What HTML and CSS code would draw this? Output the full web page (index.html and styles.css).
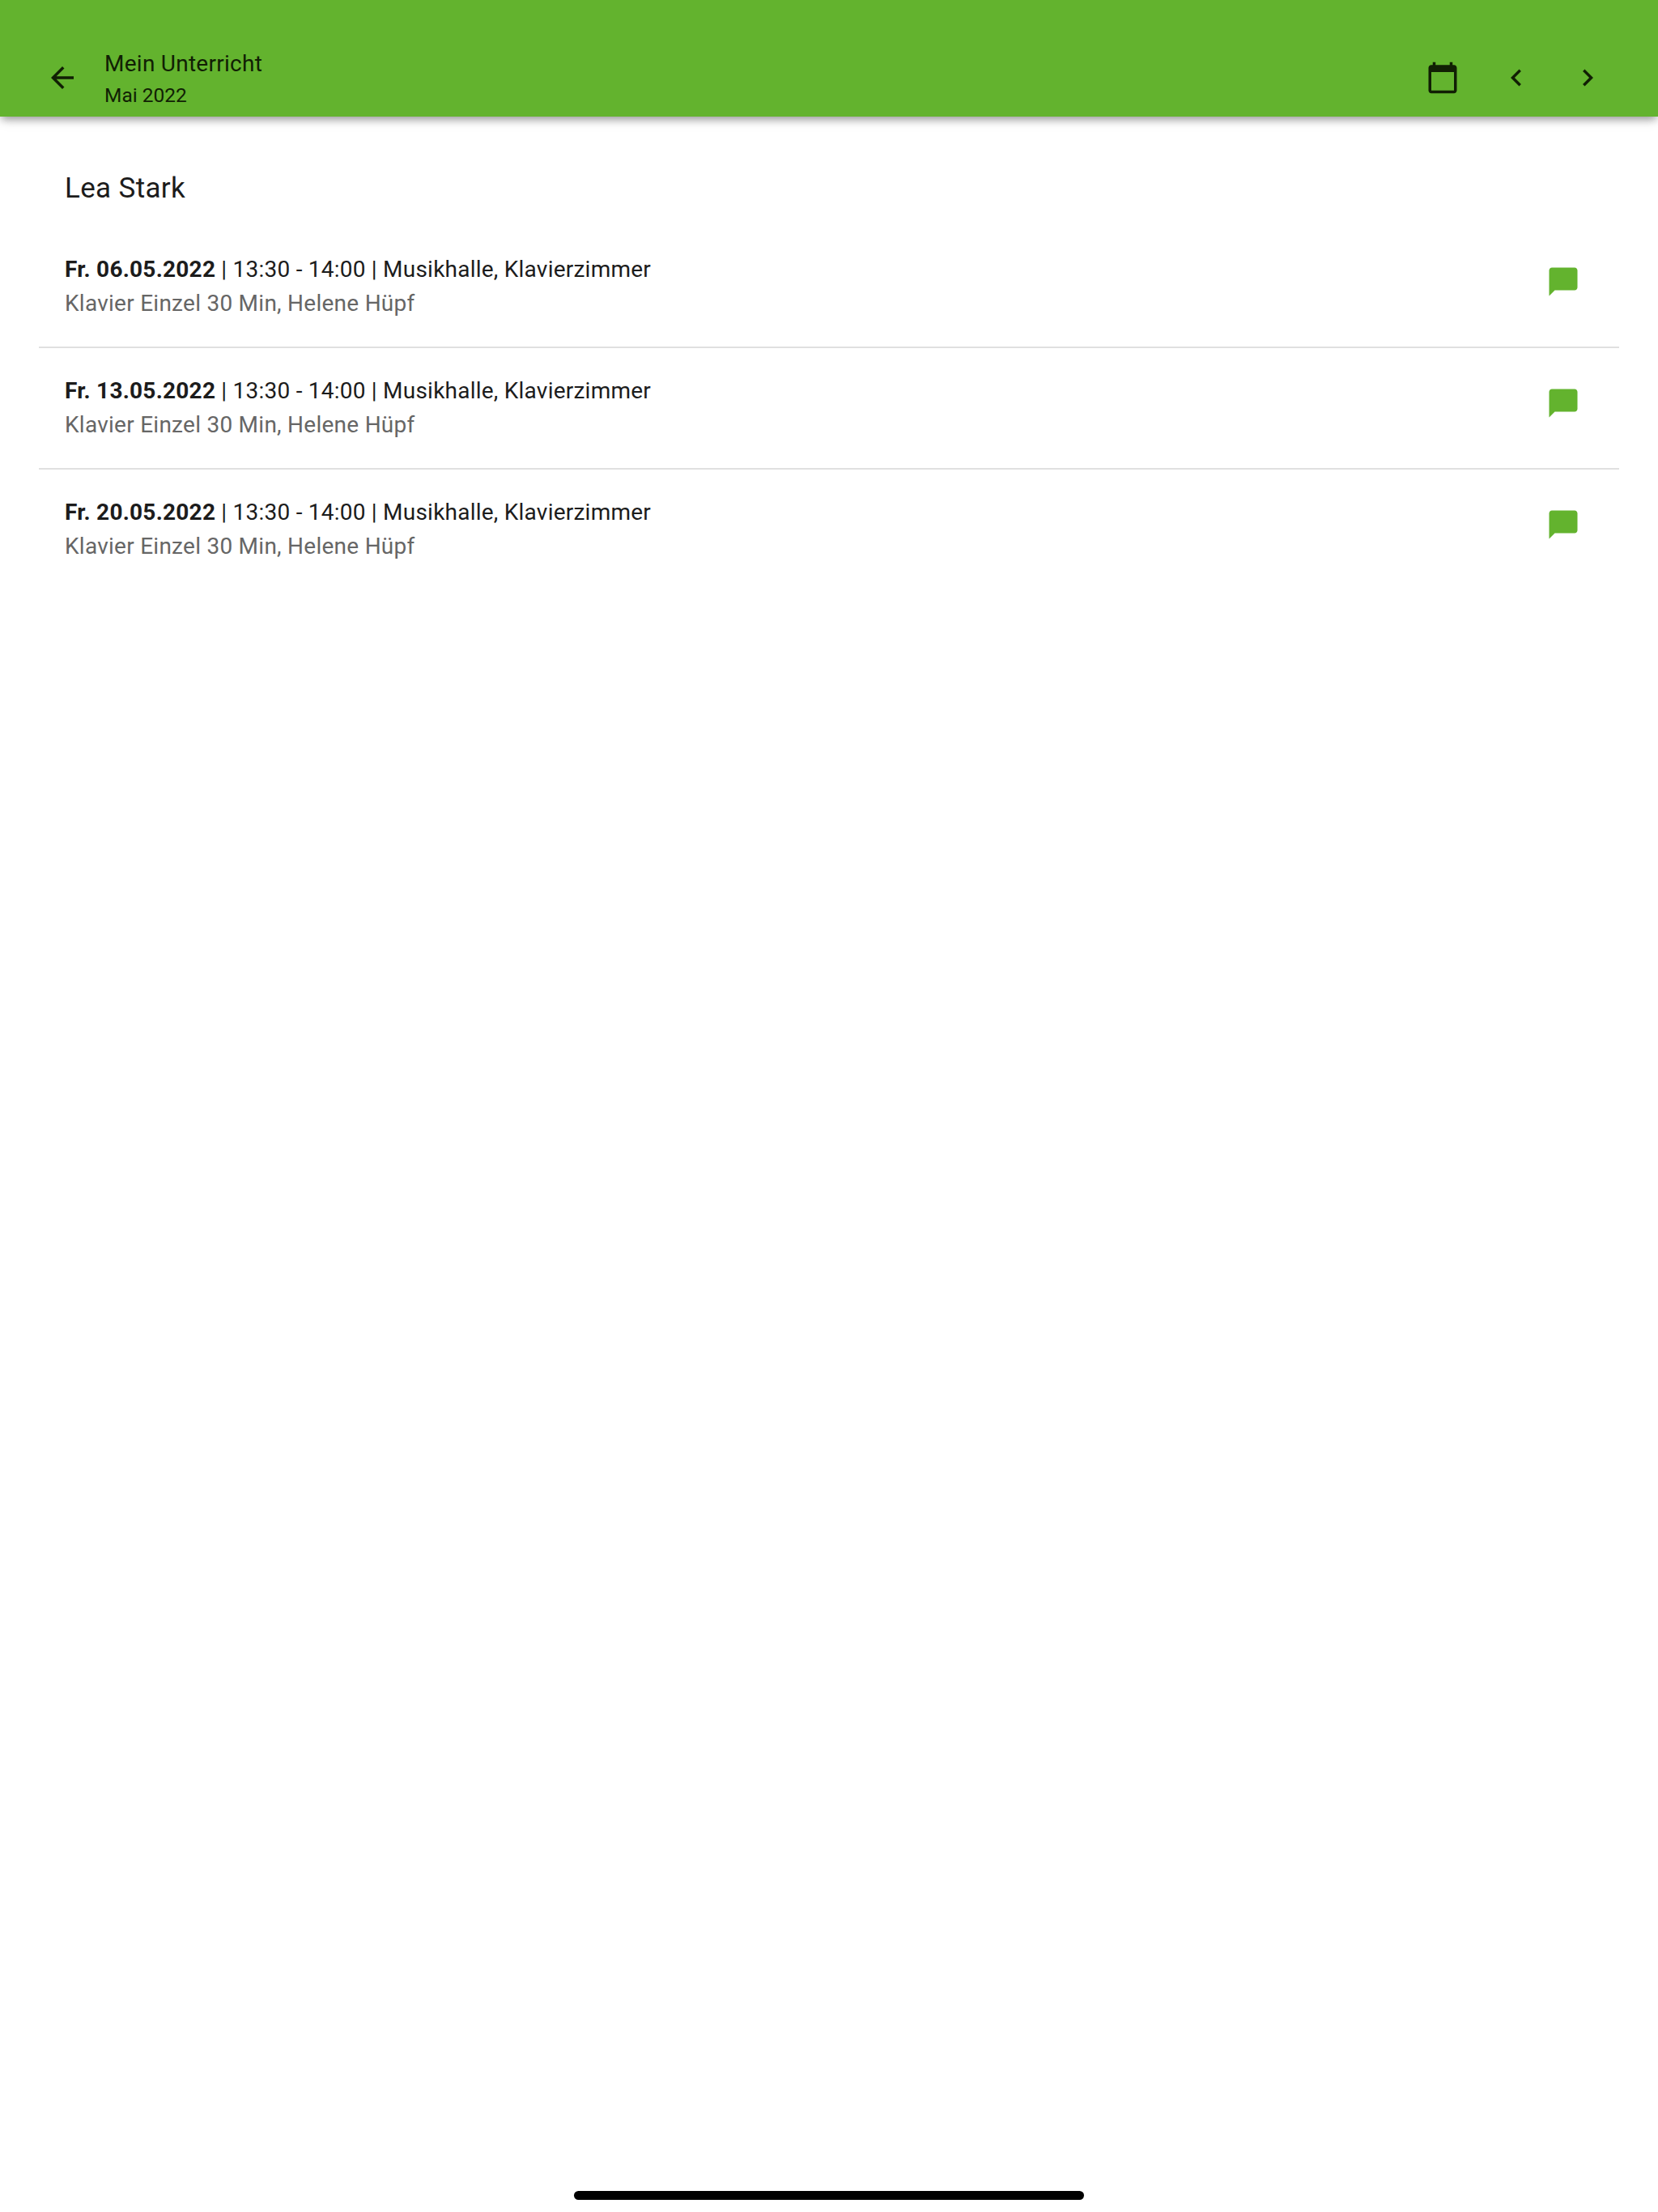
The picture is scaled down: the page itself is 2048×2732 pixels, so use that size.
FILE: index.html
```html
<!DOCTYPE html>
<html lang="de">
<head>
    <meta charset="UTF-8">
    <meta name="viewport" content="width=device-width, initial-scale=1.0">
    <title>Mein Unterricht</title>
    <link rel="stylesheet" href="styles.css">
</head>
<body>
    <div class="header">
        <svg class="icon back" viewBox="0 0 24 24"><path d="M20 11H7.83l5.59-5.59L12 4l-8 8 8 8 1.41-1.41L7.83 13H20v-2z"/></svg>
        <div class="title">
            <div class="title-main">Mein Unterricht</div>
            <div class="title-sub">Mai 2022</div>
        </div>
        <div class="actions">
            <svg class="icon calendar" viewBox="0 0 24 24"><path d="M20 3h-1V1h-2v2H7V1H5v2H4c-1.1 0-2 .9-2 2v16c0 1.1.9 2 2 2h16c1.1 0 2-.9 2-2V5c0-1.1-.9-2-2-2zm0 18H4V8h16v13z"/></svg>
            <svg class="icon prev" viewBox="0 0 24 24"><path d="M15.41 7.41L14 6l-6 6 6 6 1.41-1.41L10.83 12z"/></svg>
            <svg class="icon next" viewBox="0 0 24 24"><path d="M8.59 16.59L10 18l6-6-6-6-1.41 1.41L13.17 12z"/></svg>
        </div>
    </div>

    <div class="main-content">
        <h2 class="student">Lea Stark</h2>
        <div class="lesson">
            <div class="lesson-text">
                <div class="lesson-line"><strong>Fr. 06.05.2022</strong> | 13:30 - 14:00 | Musikhalle, Klavierzimmer</div>
                <div class="lesson-sub">Klavier Einzel 30 Min, Helene Hüpf</div>
            </div>
            <svg class="icon chat" viewBox="0 0 24 24"><path d="M20 2H4c-1.1 0-2 .9-2 2v18l4-4h14c1.1 0 2-.9 2-2V4c0-1.1-.9-2-2-2z"/></svg>
        </div>
        <div class="lesson">
            <div class="lesson-text">
                <div class="lesson-line"><strong>Fr. 13.05.2022</strong> | 13:30 - 14:00 | Musikhalle, Klavierzimmer</div>
                <div class="lesson-sub">Klavier Einzel 30 Min, Helene Hüpf</div>
            </div>
            <svg class="icon chat" viewBox="0 0 24 24"><path d="M20 2H4c-1.1 0-2 .9-2 2v18l4-4h14c1.1 0 2-.9 2-2V4c0-1.1-.9-2-2-2z"/></svg>
        </div>
        <div class="lesson">
            <div class="lesson-text">
                <div class="lesson-line"><strong>Fr. 20.05.2022</strong> | 13:30 - 14:00 | Musikhalle, Klavierzimmer</div>
                <div class="lesson-sub">Klavier Einzel 30 Min, Helene Hüpf</div>
            </div>
            <svg class="icon chat" viewBox="0 0 24 24"><path d="M20 2H4c-1.1 0-2 .9-2 2v18l4-4h14c1.1 0 2-.9 2-2V4c0-1.1-.9-2-2-2z"/></svg>
        </div>
    </div>

    <div class="home-bar"></div>
</body>
</html>
```

FILE: styles.css
```css
body {
    font-family: Roboto, sans-serif;
    margin: 0;
    padding: 0;
    height: 2732px;
    overflow: hidden;
    display: flex;
    flex-direction: column;
    background: white;
    color: #1c1c1c;
}

.icon {
    display: block;
    width: 42px;
    height: 42px;
    flex-shrink: 0;
    fill: #111f04;
}

.header {
    height: 144px;
    box-sizing: border-box;
    flex-shrink: 0;
    display: flex;
    align-items: flex-end;
    padding: 0 66px 27px 56px;
    background: #63b32e;
    box-shadow: 0 5px 10px -2px rgba(0, 0, 0, 0.4), 0 2px 20px rgba(0, 0, 0, 0.08);
    color: #111f04;
}

.title {
    margin-left: 31px;
    margin-bottom: -19px;
}

.title-main {
    font-size: 28px;
    line-height: 40px;
    letter-spacing: 0.26px;
}

.title-sub {
    font-size: 24.5px;
    line-height: 37px;
}

.actions {
    margin-left: auto;
    display: flex;
    gap: 46px;
}

.calendar {
    margin-right: 3px;
}

.main-content {
    flex-grow: 1;
    padding: 0 48px;
}

.student {
    margin: 0;
    padding: 65px 0 23px 32px;
    font-size: 35px;
    line-height: 48px;
    font-weight: 400;
    letter-spacing: 0.35px;
}

.lesson {
    height: 150px;
    box-sizing: border-box;
    display: flex;
    justify-content: space-between;
    padding: 32px 48px 0 32px;
    border-bottom: 2px solid #e0e0e0;
}

.lesson:last-child {
    border-bottom: none;
}

.lesson-line {
    font-size: 28px;
    line-height: 42px;
    letter-spacing: 0.23px;
}

.lesson-sub {
    font-size: 28px;
    line-height: 42px;
    letter-spacing: 0.26px;
    color: #666666;
}

.chat {
    fill: #63b32e;
    margin-top: 15px;
}

.home-bar {
    flex-shrink: 0;
    width: 630px;
    height: 11px;
    margin: 0 auto 15px;
    border-radius: 6px;
    background: black;
}
```
